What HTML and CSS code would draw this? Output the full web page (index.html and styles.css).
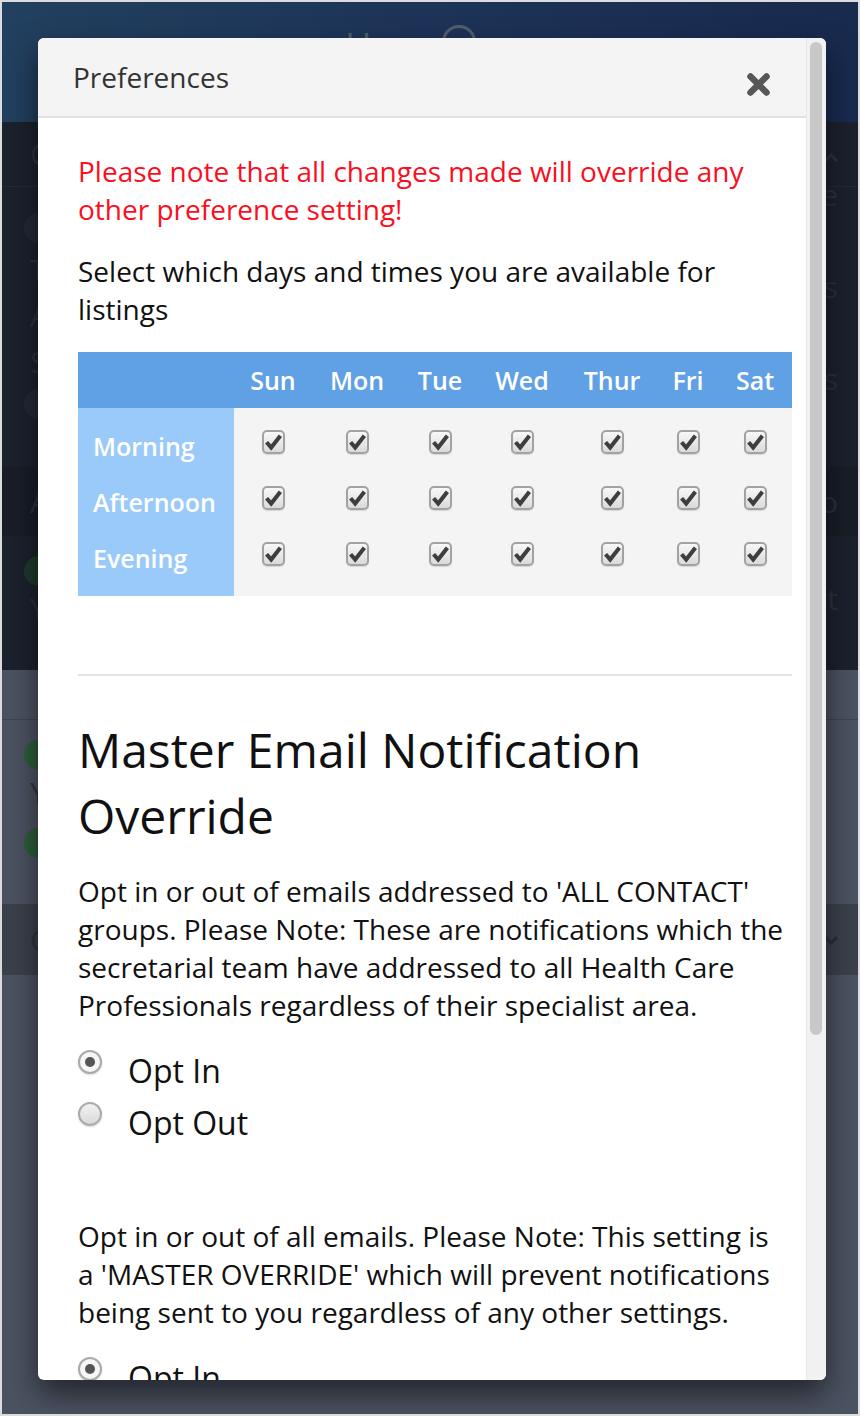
FILE: index.html
```html
<!DOCTYPE html>
<html lang="en">
<head>
<meta charset="utf-8">
<title>Preferences</title>
<link rel="stylesheet" href="styles.css">
</head>
<body>
<div class="page">
  <div class="bg">
    <header class="nav">
      <span class="nav-title">Home</span>
      <span class="nav-circle"></span>
    </header>
    <section class="dark">
      <div class="row row-a">
        <span class="ghost">C</span>
        <svg class="chev" viewBox="0 0 14 10" width="14" height="10"><path d="M1 8 L7 2 L13 8" fill="none" stroke="#2c323e" stroke-width="3"/></svg>
      </div>
      <div class="row row-b">
        <div class="gcol">
          <span class="dot dot-dark m1"></span>
          <span class="ghost m2">T</span>
          <span class="ghost">A</span>
          <span class="ghost">S</span>
          <span class="dot dot-dark m3"></span>
        </div>
        <div class="gcol gcol-r">
          <span class="ghost">e</span>
          <span class="ghost m4">s</span>
          <span class="ghost m4">s</span>
        </div>
      </div>
      <div class="row row-c">
        <span class="ghost">A</span>
        <span class="ghost">o</span>
      </div>
      <div class="row row-d">
        <div class="gcol">
          <span class="dot dot-green m5"></span>
          <span class="ghost">Y</span>
        </div>
        <div class="gcol gcol-r2">
          <span class="ghost m6">t</span>
        </div>
      </div>
    </section>
    <section class="gray gray-a">
      <span class="dot dot-green2 m7"></span>
    </section>
    <section class="gray gray-b">
      <div class="gcol">
        <span class="dot dot-green2 m8"></span>
        <span class="ghost ghost-g">Y</span>
        <span class="dot dot-green2 m9"></span>
      </div>
    </section>
    <section class="band">
      <span class="ghost ghost-g">C</span>
      <svg class="chev" viewBox="0 0 14 10" width="14" height="10"><path d="M1 2 L7 8 L13 2" fill="none" stroke="#2a2f37" stroke-width="3"/></svg>
    </section>
    <section class="gray gray-c"></section>
  </div>

  <div class="modal" role="dialog" aria-labelledby="prefs-title">
    <div class="modal-main">
      <div class="modal-header">
        <h4 class="modal-title" id="prefs-title">Preferences</h4>
        <button class="close" type="button" aria-label="Close">
          <svg viewBox="0 0 25 25" width="25" height="25"><path d="M4.5 4.5 L20.5 20.5 M20.5 4.5 L4.5 20.5" stroke="#575757" stroke-width="6.5" stroke-linecap="round" fill="none"/></svg>
        </button>
      </div>
      <div class="modal-body">
        <p class="warning">Please note that all changes made will override any other preference setting!</p>
        <p class="intro">Select which days and times you are available for listings</p>

        <table class="avail">
          <colgroup>
            <col class="c-label"><col class="c-sun"><col class="c-mon"><col class="c-tue"><col class="c-wed"><col class="c-thu"><col class="c-fri"><col class="c-sat">
          </colgroup>
          <thead>
            <tr><th></th><th>Sun</th><th>Mon</th><th>Tue</th><th>Wed</th><th>Thur</th><th>Fri</th><th>Sat</th></tr>
          </thead>
          <tbody>
            <tr class="r-first">
              <td class="label">Morning</td>
              <td><span class="cb"><svg viewBox="0 0 19 20"><path d="M2.6 10.2 L7.2 15.6 L16.4 3.8" /></svg></span></td>
              <td><span class="cb"><svg viewBox="0 0 19 20"><path d="M2.6 10.2 L7.2 15.6 L16.4 3.8" /></svg></span></td>
              <td><span class="cb"><svg viewBox="0 0 19 20"><path d="M2.6 10.2 L7.2 15.6 L16.4 3.8" /></svg></span></td>
              <td><span class="cb"><svg viewBox="0 0 19 20"><path d="M2.6 10.2 L7.2 15.6 L16.4 3.8" /></svg></span></td>
              <td><span class="cb"><svg viewBox="0 0 19 20"><path d="M2.6 10.2 L7.2 15.6 L16.4 3.8" /></svg></span></td>
              <td><span class="cb"><svg viewBox="0 0 19 20"><path d="M2.6 10.2 L7.2 15.6 L16.4 3.8" /></svg></span></td>
              <td><span class="cb"><svg viewBox="0 0 19 20"><path d="M2.6 10.2 L7.2 15.6 L16.4 3.8" /></svg></span></td>
            </tr>
            <tr>
              <td class="label">Afternoon</td>
              <td><span class="cb"><svg viewBox="0 0 19 20"><path d="M2.6 10.2 L7.2 15.6 L16.4 3.8" /></svg></span></td>
              <td><span class="cb"><svg viewBox="0 0 19 20"><path d="M2.6 10.2 L7.2 15.6 L16.4 3.8" /></svg></span></td>
              <td><span class="cb"><svg viewBox="0 0 19 20"><path d="M2.6 10.2 L7.2 15.6 L16.4 3.8" /></svg></span></td>
              <td><span class="cb"><svg viewBox="0 0 19 20"><path d="M2.6 10.2 L7.2 15.6 L16.4 3.8" /></svg></span></td>
              <td><span class="cb"><svg viewBox="0 0 19 20"><path d="M2.6 10.2 L7.2 15.6 L16.4 3.8" /></svg></span></td>
              <td><span class="cb"><svg viewBox="0 0 19 20"><path d="M2.6 10.2 L7.2 15.6 L16.4 3.8" /></svg></span></td>
              <td><span class="cb"><svg viewBox="0 0 19 20"><path d="M2.6 10.2 L7.2 15.6 L16.4 3.8" /></svg></span></td>
            </tr>
            <tr class="r-last">
              <td class="label">Evening</td>
              <td><span class="cb"><svg viewBox="0 0 19 20"><path d="M2.6 10.2 L7.2 15.6 L16.4 3.8" /></svg></span></td>
              <td><span class="cb"><svg viewBox="0 0 19 20"><path d="M2.6 10.2 L7.2 15.6 L16.4 3.8" /></svg></span></td>
              <td><span class="cb"><svg viewBox="0 0 19 20"><path d="M2.6 10.2 L7.2 15.6 L16.4 3.8" /></svg></span></td>
              <td><span class="cb"><svg viewBox="0 0 19 20"><path d="M2.6 10.2 L7.2 15.6 L16.4 3.8" /></svg></span></td>
              <td><span class="cb"><svg viewBox="0 0 19 20"><path d="M2.6 10.2 L7.2 15.6 L16.4 3.8" /></svg></span></td>
              <td><span class="cb"><svg viewBox="0 0 19 20"><path d="M2.6 10.2 L7.2 15.6 L16.4 3.8" /></svg></span></td>
              <td><span class="cb"><svg viewBox="0 0 19 20"><path d="M2.6 10.2 L7.2 15.6 L16.4 3.8" /></svg></span></td>
            </tr>
          </tbody>
        </table>

        <hr class="sep">

        <h2 class="section-title">Master Email Notification Override</h2>
        <p class="desc">Opt in or out of emails addressed to 'ALL CONTACT' groups. Please Note: These are notifications which the secretarial team have addressed to all Health Care Professionals regardless of their specialist area.</p>
        <div class="radios">
          <label class="radio"><span class="rb rb-on"></span><span class="rl">Opt In</span></label>
          <label class="radio"><span class="rb"></span><span class="rl">Opt Out</span></label>
        </div>

        <p class="desc desc-2">Opt in or out of all emails. Please Note: This setting is a 'MASTER OVERRIDE' which will prevent notifications being sent to you regardless of any other settings.</p>
        <div class="radios">
          <label class="radio"><span class="rb rb-on"></span><span class="rl">Opt In</span></label>
        </div>
      </div>
    </div>
    <div class="scrollbar"><div class="thumb"></div></div>
  </div>
</div>
</body>
</html>
```

FILE: styles.css
```css
* { box-sizing: border-box; }

html, body {
  margin: 0;
  padding: 0;
}

body {
  font-family: "Open Sans", "Liberation Sans", sans-serif;
  background: #4b5261;
}

.page {
  position: relative;
  width: 860px;
  height: 1416px;
  border: 2px solid #dcdcdc;
  overflow: hidden;
  background: #4b5261;
}

/* ---------- background page (dimmed) ---------- */
.bg {
  display: flex;
  flex-direction: column;
  height: 100%;
}

.nav {
  height: 120px;
  flex: none;
  background: linear-gradient(90deg, #22405f 0%, #1d3358 50%, #182a4e 100%);
  display: flex;
  align-items: flex-start;
  padding: 24px 0 0 343px;
}

.nav-title {
  width: 97px;
  font-size: 36px;
  line-height: 40px;
  color: #535d6d;
  overflow: hidden;
  white-space: nowrap;
}

.nav-circle {
  width: 34px;
  height: 34px;
  margin-top: -1px;
  border: 3px solid #535d6d;
  border-radius: 50%;
}

.dark {
  height: 548px;
  flex: none;
  background: #1b212d;
  display: flex;
  flex-direction: column;
}

.row {
  display: flex;
  justify-content: space-between;
  padding: 0 20px 0 28px;
}

.row-a {
  height: 65px;
  align-items: center;
  border-bottom: 1px solid #252b37;
}

.row-a .chev { margin-top: 8px; }

.row-b {
  height: 280px;
}

.row-c {
  height: 69px;
  align-items: center;
  background: #181d27;
}

.row-d {
  height: 134px;
}

.gcol {
  display: flex;
  flex-direction: column;
  align-items: flex-start;
}

.gcol-r {
  align-items: flex-end;
  margin-top: -15px;
}

.gcol-r2 {
  align-items: flex-end;
}

.ghost {
  font-size: 30px;
  line-height: 46px;
  color: #2b313d;
}

.ghost-g {
  color: #2f343d;
}

.chev { display: block; }

.dot {
  width: 30px;
  height: 30px;
  border-radius: 50%;
  margin-left: -6px;
}

.dot-dark { background: #232935; }
.dot-green { background: #1e3a2b; }
.dot-green2 { background: #2c5d3a; }

.m1 { margin-top: 26px; margin-bottom: 4px; }
.m2 { margin-top: 0; }
.m3 { margin-top: 4px; }
.m4 { margin-top: 46px; }
.m5 { margin-top: 20px; }
.m6 { margin-top: 40px; }
.m7 { margin-top: -12px; margin-left: 22px; }
.m8 { margin-top: 20px; }
.m9 { margin-top: 12px; }

.gray {
  background: #4b5261;
}

.gray-a {
  height: 50px;
  flex: none;
  border-bottom: 1px solid #3f4550;
  overflow: hidden;
}

.gray-b {
  height: 184px;
  flex: none;
  padding-left: 28px;
}

.band {
  height: 71px;
  flex: none;
  background: #3b414c;
  display: flex;
  justify-content: space-between;
  align-items: center;
  padding: 0 20px 0 28px;
}

.gray-c {
  flex: 1;
}

/* ---------- modal ---------- */
.modal {
  position: absolute;
  left: 36px;
  top: 36px;
  width: 788px;
  height: 1342px;
  display: flex;
  background: #fff;
  border-radius: 6px;
  overflow: hidden;
  box-shadow: 0 14px 30px rgba(0, 0, 0, 0.55);
}

.modal-main {
  flex: 1;
  min-width: 0;
  overflow: hidden;
}

.modal-header {
  height: 80px;
  display: flex;
  justify-content: space-between;
  align-items: flex-start;
  padding: 20px 35px 0 35px;
  background: #f4f4f4;
  border-bottom: 2px solid #e2e2e2;
}

.modal-title {
  margin: 0;
  font-size: 28px;
  line-height: 38px;
  font-weight: 400;
  color: #333;
}

.close {
  margin-top: 14px;
  width: 25px;
  height: 25px;
  padding: 0;
  border: 0;
  background: none;
}

.close svg { display: block; }

.modal-body {
  padding: 34px 14px 0 40px;
  color: #111;
}

.modal-body p {
  margin: 0;
  font-size: 28px;
  line-height: 38px;
}

.warning {
  color: #fb0f1e;
  margin-bottom: 24px !important;
}

.intro {
  margin-bottom: 24px !important;
}

/* availability table */
.avail {
  width: 714px;
  border-collapse: collapse;
  border-spacing: 0;
  table-layout: fixed;
}

.c-label { width: 156px; }
.c-sun { width: 78px; }
.c-mon { width: 90px; }
.c-tue { width: 76px; }
.c-wed { width: 88px; }
.c-thu { width: 92px; }
.c-fri { width: 60px; }
.c-sat { width: 74px; }

.avail th {
  height: 56px;
  padding: 0;
  background: #5fa1e4;
  color: #fff;
  font-size: 25px;
  font-weight: 600;
  text-align: center;
  vertical-align: middle;
}

.avail td {
  padding: 0;
  background: #f4f4f4;
  text-align: center;
  vertical-align: middle;
}

.avail tbody tr { height: 56px; }
.avail tbody tr.r-first { height: 66px; }
.avail tbody tr.r-first td { padding-top: 10px; }
.avail tbody tr.r-last { height: 66px; }
.avail tbody tr.r-last td { padding-bottom: 10px; }

.avail td.label {
  background: #9acafa;
  color: #fff;
  font-size: 25px;
  font-weight: 600;
  text-align: left;
  padding-left: 15px;
  line-height: 34px;
}

.cb {
  display: block;
  width: 23px;
  height: 24px;
  margin: 0 auto 8px;
  border: 2px solid #a2a2a2;
  border-radius: 5px;
  background: linear-gradient(#f8f8f8, #dadada);
  box-shadow: 0 1px 1px rgba(0, 0, 0, 0.12);
}

.cb svg {
  display: block;
  width: 19px;
  height: 20px;
}

.cb path {
  fill: none;
  stroke: #3e3e3e;
  stroke-width: 4;
}

.sep {
  margin: 78px 0 0;
  border: 0;
  border-top: 2px solid #e3e3e3;
  height: 0;
}

.section-title {
  margin: 41px 0 23px;
  font-size: 48px;
  line-height: 66px;
  font-weight: 400;
  color: #111;
}

.desc {
  margin-bottom: 18px !important;
  padding-right: 4px;
}

.desc-2 {
  margin-top: 71px !important;
}

.radio {
  display: flex;
  align-items: flex-start;
  height: 52px;
}

.rb {
  flex: none;
  width: 24px;
  height: 24px;
  margin-top: 8px;
  border-radius: 50%;
  border: 2px solid #aaaaaa;
  background: linear-gradient(#f2f2f2, #d9d9d9);
  box-shadow: 0 1px 2px rgba(0, 0, 0, 0.15);
  display: flex;
  align-items: center;
  justify-content: center;
}

.rb-on {
  background: #f6f6f6;
}

.rb-on::after {
  content: "";
  width: 10px;
  height: 10px;
  border-radius: 50%;
  background: #555;
}

.rl {
  margin-left: 26px;
  padding-top: 3px;
  font-size: 32px;
  line-height: 52px;
  color: #111;
}

/* scrollbar */
.scrollbar {
  flex: none;
  width: 20px;
  background: #f1f1f1;
  border-left: 1px solid #e8e8e8;
  padding: 4px 3px 0 3px;
}

.thumb {
  width: 12px;
  height: 993px;
  border-radius: 6px;
  background: #c8c8c8;
}
```
